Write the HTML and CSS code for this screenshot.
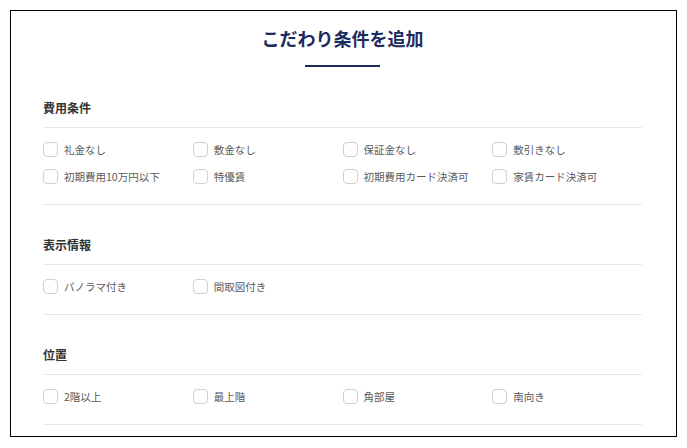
FILE: index.html
```html
<!DOCTYPE html>
<html lang="ja">
<head>
    <meta charset="UTF-8">
    <meta name="viewport" content="width=device-width, initial-scale=1.0">
    <title>こだわり条件を追加</title>
    <link rel="stylesheet" href="styles.css">
</head>
<body>

    <div class="modal">
        <h2 class="modal-title">こだわり条件を追加</h2>
        <div class="title-bar"></div>

        <!-- 費用 -->
        <section class="cond-group">
            <h3 class="cond-heading">費用条件</h3>
            <div class="cond-options">
                <label class="cond-item"><input type="checkbox"><span class="box"></span>礼金なし</label>
                <label class="cond-item"><input type="checkbox"><span class="box"></span>敷金なし</label>
                <label class="cond-item"><input type="checkbox"><span class="box"></span>保証金なし</label>
                <label class="cond-item"><input type="checkbox"><span class="box"></span>敷引きなし</label>
                <label class="cond-item"><input type="checkbox"><span class="box"></span>初期費用10万円以下</label>
                <label class="cond-item"><input type="checkbox"><span class="box"></span>特優賃</label>
                <label class="cond-item"><input type="checkbox"><span class="box"></span>初期費用カード決済可</label>
                <label class="cond-item"><input type="checkbox"><span class="box"></span>家賃カード決済可</label>
            </div>
        </section>

        <!-- 表示 -->
        <section class="cond-group">
            <h3 class="cond-heading">表示情報</h3>
            <div class="cond-options">
                <label class="cond-item"><input type="checkbox"><span class="box"></span>パノラマ付き</label>
                <label class="cond-item"><input type="checkbox"><span class="box"></span>間取図付き</label>
            </div>
        </section>

        <!-- 位置 -->
        <section class="cond-group">
            <h3 class="cond-heading">位置</h3>
            <div class="cond-options">
                <label class="cond-item"><input type="checkbox"><span class="box"></span>2階以上</label>
                <label class="cond-item"><input type="checkbox"><span class="box"></span>最上階</label>
                <label class="cond-item"><input type="checkbox"><span class="box"></span>角部屋</label>
                <label class="cond-item"><input type="checkbox"><span class="box"></span>南向き</label>
            </div>
        </section>
    </div>

</body>
</html>
```

FILE: styles.css
```css
* {
    box-sizing: border-box;
}
body {
    margin: 0;
    padding: 10px;
    font-family: "Noto Sans CJK JP", "Noto Sans", sans-serif;
    background: #fff;
}
.modal {
    width: 667px;
    height: 427px;
    border: 1px solid #000;
    padding: 0 34px 0 32px;
    overflow: hidden;
}
.modal-title {
    margin: 14px 0 0;
    font-size: 18px;
    line-height: 26px;
    font-weight: bold;
    text-align: center;
    color: #1c2c5e;
}
.title-bar {
    width: 75px;
    height: 2px;
    margin: 14px auto 0;
    background: #1c2c5e;
}
.cond-group {
    border-bottom: 1px solid #e8e8e8;
}
.cond-group:first-of-type .cond-heading {
    margin-top: 31px;
}
.cond-heading {
    margin: 30px 0 0;
    padding-bottom: 9px;
    font-size: 12px;
    line-height: 20px;
    font-weight: bold;
    color: #333;
    border-bottom: 1px solid #e8e8e8;
}
.cond-options {
    display: grid;
    grid-template-columns: repeat(4, 1fr);
    padding: 8px 0 14px;
}
.cond-item {
    display: flex;
    align-items: center;
    height: 27px;
    font-size: 10.5px;
    color: #5a5a5a;
    cursor: pointer;
}
.cond-item input {
    display: none;
}
.box {
    width: 15px;
    height: 15px;
    margin-right: 6px;
    border: 1px solid #d0d0d0;
    border-radius: 4px;
    background: #fff;
}
.cond-item input:checked + .box {
    background: #1c2c5e;
    border-color: #1c2c5e;
}
```
